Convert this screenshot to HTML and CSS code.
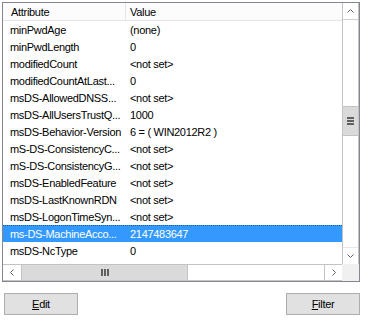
FILE: index.html
```html
<!DOCTYPE html>
<html lang="en">
<head>
  <meta charset="UTF-8">
  <title>Attribute Editor</title>
  <link rel="stylesheet" href="styles.css">
</head>
<body>
  <div class="list">
    <div class="content">
      <div class="head">
        <div class="col-name">Attribute</div>
        <div class="col-value">Value</div>
      </div>
      <div class="row"><span class="c1">minPwdAge</span><span class="c2">(none)</span></div>
      <div class="row"><span class="c1">minPwdLength</span><span class="c2">0</span></div>
      <div class="row"><span class="c1">modifiedCount</span><span class="c2">&lt;not set&gt;</span></div>
      <div class="row"><span class="c1">modifiedCountAtLast...</span><span class="c2">0</span></div>
      <div class="row"><span class="c1">msDS-AllowedDNSS...</span><span class="c2">&lt;not set&gt;</span></div>
      <div class="row"><span class="c1">msDS-AllUsersTrustQ...</span><span class="c2">1000</span></div>
      <div class="row"><span class="c1">msDS-Behavior-Version</span><span class="c2">6 = ( WIN2012R2 )</span></div>
      <div class="row"><span class="c1">mS-DS-ConsistencyC...</span><span class="c2">&lt;not set&gt;</span></div>
      <div class="row"><span class="c1">mS-DS-ConsistencyG...</span><span class="c2">&lt;not set&gt;</span></div>
      <div class="row"><span class="c1">msDS-EnabledFeature</span><span class="c2">&lt;not set&gt;</span></div>
      <div class="row"><span class="c1">msDS-LastKnownRDN</span><span class="c2">&lt;not set&gt;</span></div>
      <div class="row"><span class="c1">msDS-LogonTimeSyn...</span><span class="c2">&lt;not set&gt;</span></div>
      <div class="row selected"><span class="c1">ms-DS-MachineAcco...</span><span class="c2">2147483647</span></div>
      <div class="row"><span class="c1">msDS-NcType</span><span class="c2">0</span></div>
    </div>

    <div class="vscroll">
      <div class="arrow arrow-up">
        <svg width="7" height="4" viewBox="0 0 7 4"><polyline points="0.5,3.5 3.5,0.5 6.5,3.5" fill="none" stroke="#606060" stroke-width="1"/></svg>
      </div>
      <div class="vtrack">
        <div class="vthumb"><span></span><span></span><span></span></div>
      </div>
      <div class="arrow arrow-down">
        <svg width="7" height="4" viewBox="0 0 7 4"><polyline points="0.5,0.5 3.5,3.5 6.5,0.5" fill="none" stroke="#606060" stroke-width="1"/></svg>
      </div>
    </div>

    <div class="hscroll">
      <div class="harrow harrow-left">
        <svg width="4" height="7" viewBox="0 0 4 7"><polyline points="3.5,0.5 0.5,3.5 3.5,6.5" fill="none" stroke="#606060" stroke-width="1"/></svg>
      </div>
      <div class="hthumb"><span></span><span></span><span></span></div>
      <div class="htrack"></div>
      <div class="harrow harrow-right">
        <svg width="4" height="7" viewBox="0 0 4 7"><polyline points="0.5,0.5 3.5,3.5 0.5,6.5" fill="none" stroke="#606060" stroke-width="1"/></svg>
      </div>
    </div>

    <div class="corner"></div>
  </div>

  <div class="buttons">
    <button class="btn"><u>E</u>dit</button>
    <button class="btn"><u>F</u>ilter</button>
  </div>
</body>
</html>
```

FILE: styles.css
```css
* {
  margin: 0;
  padding: 0;
  box-sizing: border-box;
}

body {
  background: #fff;
  font-family: "Liberation Sans", Arial, sans-serif;
  font-size: 11px;
  letter-spacing: -0.3px;
  color: #000;
}

.list {
  margin: 2px 0 0 2px;
  width: 358px;
  height: 280px;
  border: 1px solid #828790;
  display: grid;
  grid-template-columns: 1fr 17px;
  grid-template-rows: 1fr 17px;
  overflow: hidden;
}

.content {
  overflow: hidden;
  white-space: nowrap;
}

.head {
  display: flex;
  height: 18px;
  background: #fcfcfc;
  border-bottom: 1px solid #e5e5e5;
}

.col-name {
  width: 123px;
  padding: 3px 0 0 8px;
  border-right: 1px solid #e5e5e5;
}

.col-value {
  padding: 3px 0 0 4px;
}

.row {
  display: flex;
  height: 17px;
  padding-top: 3px;
}

.c1 {
  width: 127px;
  padding-left: 7px;
}

.selected {
  background: #3399ff;
  color: #fff;
  border-top: 1px dotted #1c5fa6;
  padding-top: 2px;
}

.vscroll {
  display: flex;
  flex-direction: column;
  border-left: 1px solid #c3c3c3;
  border-right: 1px solid #c3c3c3;
  background: #fff;
}

.arrow {
  height: 17px;
  display: flex;
  align-items: center;
  justify-content: center;
}

.arrow-up {
  border-bottom: 1px solid #d0d0d0;
}

.arrow-down {
  border-top: 1px solid #e8e8e8;
}

.vtrack {
  flex: 1;
  padding-top: 86px;
}

.vthumb {
  height: 30px;
  background: #dadada;
  border-top: 1px solid #c3c3c3;
  border-bottom: 1px solid #c3c3c3;
  display: flex;
  flex-direction: column;
  align-items: center;
  justify-content: center;
  gap: 1px;
}

.vthumb span {
  width: 7px;
  height: 2px;
  background: #606060;
}

.hscroll {
  display: flex;
  border-top: 1px solid #c3c3c3;
  border-bottom: 1px solid #c3c3c3;
  background: #fff;
}

.harrow {
  width: 18px;
  display: flex;
  align-items: center;
  justify-content: center;
}

.harrow-left {
  width: 19px;
  border-right: 1px solid #c3c3c3;
}

.harrow-right {
  border-left: 1px solid #c3c3c3;
}

.hthumb {
  width: 166px;
  background: #dadada;
  border-right: 1px solid #c3c3c3;
  display: flex;
  align-items: center;
  justify-content: center;
  gap: 1px;
}

.hthumb span {
  width: 2px;
  height: 7px;
  background: #606060;
}

.htrack {
  flex: 1;
}

.corner {
  background: #f0f0f0;
}

.buttons {
  display: flex;
  justify-content: space-between;
  margin: 11px 0 0 4px;
  width: 356px;
}

.btn {
  width: 74px;
  height: 22px;
  background: #e1e1e1;
  border: 1px solid #adadad;
  font-family: "Liberation Sans", Arial, sans-serif;
  font-size: 11px;
  letter-spacing: -0.3px;
  color: #000;
}

.btn u {
  text-decoration: underline;
}
```
